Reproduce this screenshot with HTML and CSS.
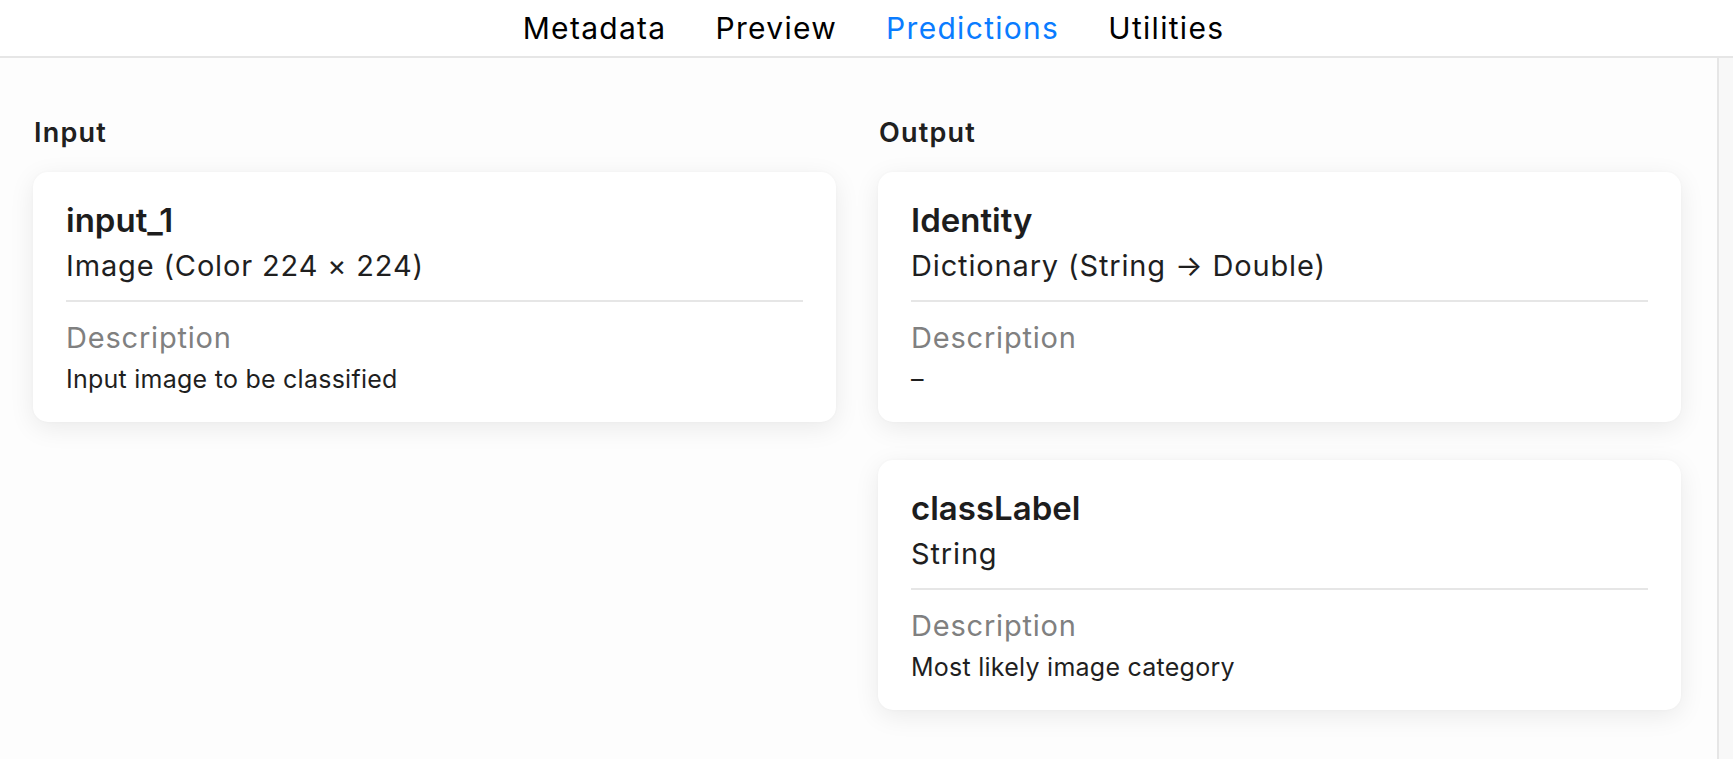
FILE: index.html
```html
<!DOCTYPE html>
<html lang="en">
<head>
<meta charset="utf-8">
<title>Predictions</title>
<link rel="stylesheet" href="styles.css">
</head>
<body>
<header class="tabbar">
  <nav class="tabs">
    <span class="tab">Metadata</span>
    <span class="tab">Preview</span>
    <span class="tab active">Predictions</span>
    <span class="tab">Utilities</span>
  </nav>
</header>
<div class="body">
  <main class="content">
    <section class="column">
      <h2 class="heading">Input</h2>
      <div class="card">
        <div class="title">input_1</div>
        <div class="type">Image (Color 224 × 224)</div>
        <div class="divider"></div>
        <div class="label">Description</div>
        <div class="desc">Input image to be classified</div>
      </div>
    </section>
    <section class="column">
      <h2 class="heading">Output</h2>
      <div class="card">
        <div class="title">Identity</div>
        <div class="type">Dictionary (String → Double)</div>
        <div class="divider"></div>
        <div class="label">Description</div>
        <div class="desc">–</div>
      </div>
      <div class="card">
        <div class="title">classLabel</div>
        <div class="type">String</div>
        <div class="divider"></div>
        <div class="label">Description</div>
        <div class="desc">Most likely image category</div>
      </div>
    </section>
  </main>
  <div class="scrolltrack"></div>
</div>
</body>
</html>
```

FILE: styles.css
```css
* { box-sizing: border-box; }
html, body { margin: 0; padding: 0; }
body {
  width: 1733px;
  height: 759px;
  overflow: hidden;
  font-family: "Inter", "Noto Sans", sans-serif;
  color: #1f1f1f;
  background: #fff;
  display: flex;
  flex-direction: column;
}
.tabbar {
  height: 58px;
  flex: none;
  background: #fff;
  border-bottom: 2px solid #e6e6e6;
  display: flex;
  justify-content: center;
  padding-left: 14px;
}
.tabs {
  display: flex;
  gap: 49px;
}
.tab {
  font-size: 30px;
  line-height: 56px;
  letter-spacing: 1.3px;
  color: #000;
  font-weight: 400;
}
.tab.active { color: #0a7cff; }
.body {
  flex: 1;
  display: flex;
  min-height: 0;
}
.content {
  flex: 1;
  background: #fdfdfd;
  padding: 59px 36px 0 33px;
  display: grid;
  grid-template-columns: 1fr 1fr;
  column-gap: 42px;
  align-items: start;
}
.column {
  display: flex;
  flex-direction: column;
  gap: 38px;
}
.heading {
  margin: 0 0 -15px 1px;
  font-size: 27px;
  line-height: 32px;
  letter-spacing: 1.2px;
  font-weight: 600;
  color: #202020;
}
.card {
  background: #fff;
  border-radius: 15px;
  padding: 28px 33px 28px 33px;
  box-shadow: 0 6px 26px rgba(0,0,0,0.08), 0 0 3px rgba(0,0,0,0.03);
}
.title {
  font-size: 33px;
  line-height: 40px;
  font-weight: 600;
  color: #1d1d1d;
}
.type {
  font-size: 29px;
  line-height: 36px;
  letter-spacing: 0.85px;
  margin-top: 7.5px;
  color: #1f1f1f;
}
.divider {
  height: 2px;
  background: #e6e6e6;
  margin-top: 16.5px;
}
.label {
  font-size: 29px;
  line-height: 36px;
  letter-spacing: 0.8px;
  margin-top: 17.5px;
  color: #808080;
}
.desc {
  font-size: 25px;
  line-height: 30px;
  letter-spacing: 0.25px;
  margin-top: 8.5px;
  color: #1f1f1f;
}
.scrolltrack {
  width: 16px;
  flex: none;
  background: #f8f8f8;
  border-left: 2px solid #e6e6e6;
}
```
